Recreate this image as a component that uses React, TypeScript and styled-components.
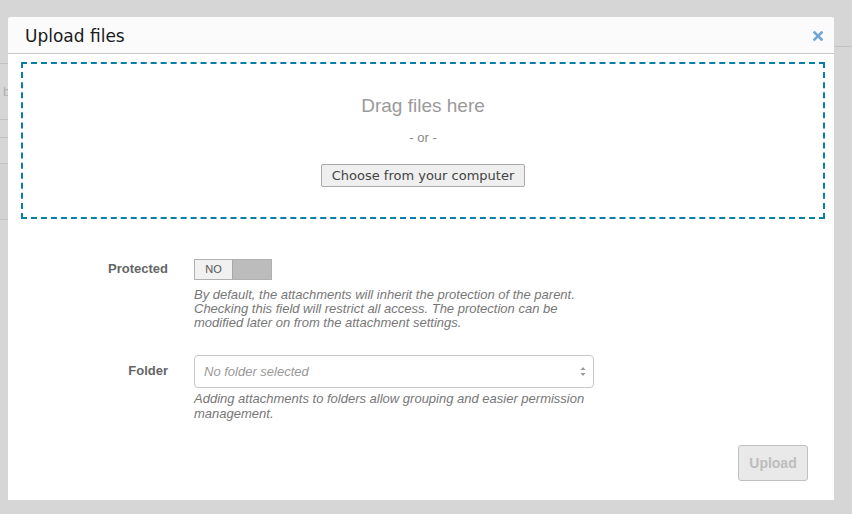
import React from 'react';
import styled, { createGlobalStyle } from 'styled-components';

const GlobalStyle = createGlobalStyle`
  html, body {
    margin: 0;
    padding: 0;
    background: #d6d6d6;
    font-family: 'Liberation Sans', Arial, sans-serif;
  }
`;

const Screen = styled.div`
  position: relative;
  width: 852px;
  height: 514px;
  overflow: hidden;
  background: #d6d6d6;
`;

const Backdrop = styled.div`
  display: grid;
  grid-template-columns: 420px 1fr;
  height: 100%;
`;

const BackdropColumn = styled.div`
  display: flex;
  flex-direction: column;
`;

const BackdropRow = styled.div<{ $height: number; $shade?: boolean }>`
  height: ${p => p.$height}px;
  border-bottom: 1px solid #c2c2c2;
  background: ${p => (p.$shade ? '#d2d2d2' : 'transparent')};
  color: #b0b0b0;
  font-size: 13px;
  line-height: ${p => p.$height}px;
  padding-left: 3px;
`;

const Overlay = styled.div`
  position: absolute;
  inset: 0;
`;

const Modal = styled.div`
  position: absolute;
  left: 8px;
  top: 17px;
  width: 826px;
  height: 483px;
  background: #fff;
  border-radius: 3px 3px 0 0;
  display: flex;
  flex-direction: column;
`;

const Header = styled.div`
  flex-shrink: 0;
  box-sizing: border-box;
  height: 37px;
  background: #fbfbfb;
  border-bottom: 1px solid #cacaca;
  border-radius: 3px 3px 0 0;
  display: flex;
  align-items: center;
  justify-content: space-between;
  padding: 1px 11px 0 17px;
`;

const Title = styled.h1`
  margin: 0;
  font-family: 'DejaVu Sans', Verdana, sans-serif;
  font-size: 17px;
  font-weight: normal;
  color: #1a1a1a;
`;

const CloseButton = styled.button`
  border: none;
  background: none;
  padding: 0;
  width: 11px;
  height: 11px;
  display: flex;
  align-items: center;
  justify-content: center;
  cursor: pointer;
`;

const Body = styled.div`
  padding: 8px 9px 0 13px;
  display: flex;
  flex-direction: column;
`;

const DropZone = styled.div`
  box-sizing: border-box;
  height: 157px;
  border: 2px dashed #0a7ea8;
  display: flex;
  flex-direction: column;
  align-items: center;
  padding-top: 31px;
`;

const DropTitle = styled.div`
  font-size: 19px;
  line-height: 22px;
  color: #9a9a9a;
`;

const Or = styled.div`
  margin-top: 13px;
  font-size: 13px;
  line-height: 16px;
  color: #8a8a8a;
`;

const ChooseButton = styled.button`
  margin-top: 18px;
  height: 23px;
  padding: 0 10px;
  font-family: 'DejaVu Sans', Verdana, sans-serif;
  font-size: 13px;
  color: #444;
  background: #efefef;
  border: 1px solid #a9a9a9;
  border-radius: 2px;
`;

const Form = styled.div`
  margin-top: 40px;
  display: grid;
  grid-template-columns: 147px 400px;
  column-gap: 26px;
  row-gap: 25px;
`;

const Label = styled.div<{ $top: number }>`
  text-align: right;
  font-size: 13px;
  font-weight: bold;
  color: #666;
  padding-top: ${p => p.$top}px;
`;

const Field = styled.div`
  display: flex;
  flex-direction: column;
  align-items: flex-start;
`;

const Toggle = styled.div`
  display: flex;
  width: 76px;
  height: 19px;
  border: 1px solid #b0b0b0;
`;

const ToggleLabel = styled.div`
  width: 37px;
  background: #f1f1f1;
  font-size: 11px;
  line-height: 19px;
  color: #555;
  text-align: center;
  border-right: 1px solid #a8a8a8;
`;

const ToggleKnob = styled.div`
  flex: 1;
  background: #bcbcbc;
`;

const Help = styled.p<{ $gap: number; $lineHeight: number }>`
  margin: ${p => p.$gap}px 0 0;
  font-size: 13px;
  line-height: ${p => p.$lineHeight}px;
  font-style: italic;
  color: #777;
  width: 400px;
`;

const Select = styled.div`
  box-sizing: border-box;
  width: 400px;
  height: 33px;
  border: 1px solid #c8c8c8;
  border-radius: 4px;
  display: flex;
  align-items: center;
  justify-content: space-between;
  padding: 0 7px 0 9px;
`;

const Placeholder = styled.span`
  font-size: 13px;
  font-style: italic;
  color: #999;
`;

const Footer = styled.div`
  display: flex;
  justify-content: flex-end;
  padding: 24px 17px 0 0;
`;

const UploadButton = styled.button`
  width: 70px;
  height: 36px;
  font-family: 'Liberation Sans', Arial, sans-serif;
  font-size: 14px;
  font-weight: bold;
  color: #bdbdbd;
  background: #e9e9e9;
  border: 1px solid #c0c0c0;
  border-radius: 3px;
`;

const App = () => (
  <Screen>
    <GlobalStyle />
    <Backdrop>
      <BackdropColumn>
        <BackdropRow $height={63} />
        <BackdropRow $height={55}>b</BackdropRow>
        <BackdropRow $height={17} />
        <BackdropRow $height={25} />
        <BackdropRow $height={55} $shade />
      </BackdropColumn>
      <BackdropColumn>
        <BackdropRow $height={46} />
      </BackdropColumn>
    </Backdrop>
    <Overlay>
      <Modal>
        <Header>
          <Title>Upload files</Title>
          <CloseButton aria-label="Close">
            <svg width="10" height="10" viewBox="0 0 10 10">
              <path d="M1.5 1.5 L8.5 8.5 M8.5 1.5 L1.5 8.5" stroke="#6ea6d8" strokeWidth="2.6" strokeLinecap="square" />
            </svg>
          </CloseButton>
        </Header>
        <Body>
          <DropZone>
            <DropTitle>Drag files here</DropTitle>
            <Or>- or -</Or>
            <ChooseButton>Choose from your computer</ChooseButton>
          </DropZone>
          <Form>
            <Label $top={2}>Protected</Label>
            <Field>
              <Toggle>
                <ToggleLabel>NO</ToggleLabel>
                <ToggleKnob />
              </Toggle>
              <Help $gap={8} $lineHeight={14}>
                By default, the attachments will inherit the protection of the parent.
                Checking this field will restrict all access. The protection can be
                modified later on from the attachment settings.
              </Help>
            </Field>
            <Label $top={8}>Folder</Label>
            <Field>
              <Select>
                <Placeholder>No folder selected</Placeholder>
                <svg width="6" height="11" viewBox="0 0 6 11">
                  <path d="M3 1 L5.5 4 L0.5 4 Z M3 10 L5.5 7 L0.5 7 Z" fill="#9a9a9a" />
                </svg>
              </Select>
              <Help $gap={3} $lineHeight={15}>
                Adding attachments to folders allow grouping and easier permission
                management.
              </Help>
            </Field>
          </Form>
          <Footer>
            <UploadButton disabled>Upload</UploadButton>
          </Footer>
        </Body>
      </Modal>
    </Overlay>
  </Screen>
);

export default App;
